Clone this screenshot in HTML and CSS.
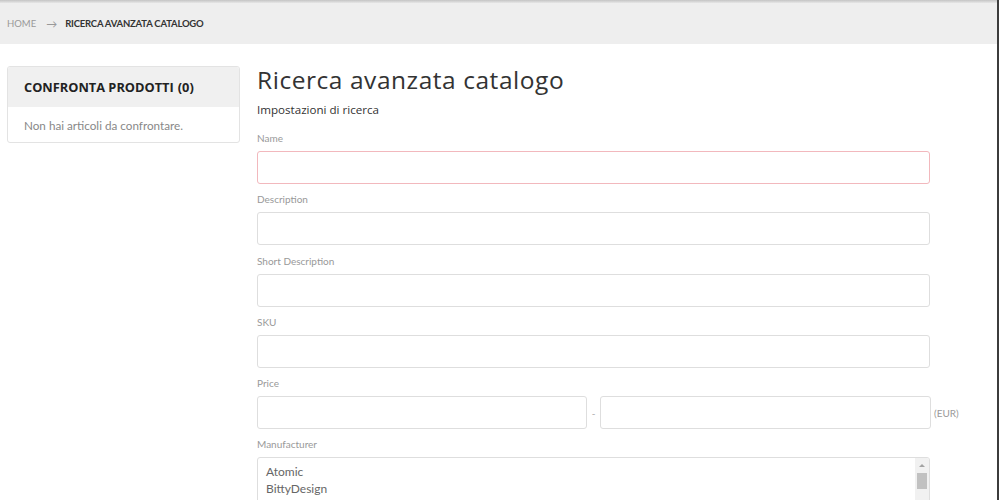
FILE: index.html
```html
<!DOCTYPE html>
<html lang="it">
<head>
<meta charset="utf-8">
<title>Ricerca avanzata catalogo</title>
<link rel="stylesheet" href="styles.css">
</head>
<body>
<div class="frame">
  <div class="topline"></div>
  <nav class="breadcrumb">
    <span class="crumb">Home</span>
    <span class="sep">&rarr;</span>
    <strong class="crumb current">Ricerca avanzata catalogo</strong>
  </nav>
  <div class="page">
    <aside class="sidebar">
      <div class="block">
        <div class="block-title">Confronta prodotti <span class="count">(0)</span></div>
        <div class="block-content">Non hai articoli da confrontare.</div>
      </div>
    </aside>
    <main class="main">
      <h1 class="page-title">Ricerca avanzata catalogo</h1>
      <h2 class="subtitle">Impostazioni di ricerca</h2>
      <form class="form">
        <div class="field">
          <label class="label">Name</label>
          <input class="input input-error" type="text">
        </div>
        <div class="field">
          <label class="label">Description</label>
          <input class="input" type="text">
        </div>
        <div class="field">
          <label class="label">Short Description</label>
          <input class="input" type="text">
        </div>
        <div class="field">
          <label class="label">SKU</label>
          <input class="input" type="text">
        </div>
        <div class="field">
          <label class="label">Price</label>
          <div class="price-row">
            <input class="input price" type="text">
            <span class="dash">-</span>
            <input class="input price price2" type="text">
            <span class="currency">(EUR)</span>
          </div>
        </div>
        <div class="field">
          <label class="label">Manufacturer</label>
          <div class="listbox">
            <div class="options">
              <div class="option">Atomic</div>
              <div class="option">BittyDesign</div>
            </div>
            <div class="scrollbar">
              <div class="arrow"></div>
              <div class="thumb"></div>
            </div>
          </div>
        </div>
      </form>
    </main>
  </div>
</div>
</body>
</html>
```
FILE: styles.css
```css
html, body {
  margin: 0;
  padding: 0;
  background: #fff;
  overflow: hidden;
}
body {
  font-family: Lato, "Liberation Sans", sans-serif;
  color: #333;
}
.frame {
  height: 500px;
  overflow: hidden;
  border-right: 2px solid #3c3c3c;
  box-sizing: border-box;
}
.topline {
  height: 3px;
  background: linear-gradient(#c4c4c4, #e6e6e6);
}
.breadcrumb {
  height: 41px;
  background: #eeeeee;
  display: flex;
  align-items: center;
  padding-left: 7px;
  font-size: 9.5px;
  text-transform: uppercase;
}
.crumb {
  color: #999;
}
.sep {
  color: #999;
  margin: 0 8px 0 10px;
  font-size: 11px;
}
.current {
  color: #333;
  font-weight: 700;
  letter-spacing: -0.2px;
}
.page {
  display: flex;
  gap: 17px;
  padding: 22px 0 0 7px;
}
.sidebar {
  width: 233px;
  flex: none;
}
.block {
  border: 1px solid #e3e3e3;
  border-radius: 3px;
  overflow: hidden;
}
.block-title {
  height: 40px;
  background: #f0f0f0;
  display: flex;
  align-items: center;
  padding-left: 16px;
  font-family: "Open Sans", Lato, sans-serif;
  font-weight: 700;
  font-size: 12.8px;
  text-transform: uppercase;
  color: #222;
}
.count {
  margin-left: 4px;
}
.block-content {
  height: 35px;
  display: flex;
  align-items: center;
  padding-left: 16px;
  font-size: 11.7px;
  color: #888;
}
.main {
  width: 673px;
  flex: none;
}
.page-title {
  margin: 0;
  font-family: "Open Sans", Lato, sans-serif;
  font-weight: 400;
  font-size: 24.5px;
  letter-spacing: 0.55px;
  line-height: 28px;
  color: #333;
}
.subtitle {
  margin: 8px 0 0;
  font-family: "Open Sans", Lato, sans-serif;
  font-weight: 400;
  font-size: 11.6px;
  line-height: 16px;
  color: #333;
}
.form {
  margin-top: 13px;
}
.field {
  margin-bottom: 8.3px;
}
.label {
  display: block;
  font-size: 10px;
  line-height: 14px;
  color: #999;
  margin-bottom: 6px;
}
.input {
  display: block;
  box-sizing: border-box;
  width: 100%;
  height: 33px;
  margin: 0;
  border: 1px solid #dedede;
  border-radius: 3px;
  background: #fff;
  outline: none;
}
.input.input-error {
  border-color: #f2b8bd;
}
.price-row {
  display: flex;
  align-items: center;
  width: 702px;
}
.price {
  width: 330px;
  flex: none;
}
.price2 {
  width: 331px;
}
.dash {
  width: 13px;
  text-align: center;
  font-size: 10px;
  color: #aaa;
}
.currency {
  margin-left: 3px;
  font-size: 10px;
  color: #999;
}
.listbox {
  display: flex;
  box-sizing: border-box;
  height: 60px;
  border: 1px solid #dedede;
  border-radius: 3px;
  overflow: hidden;
}
.options {
  flex: 1;
  padding: 5px 0 0 8px;
  font-size: 12px;
  line-height: 17px;
  color: #666;
}
.scrollbar {
  width: 14px;
  background: #f1f1f1;
  display: flex;
  flex-direction: column;
  align-items: center;
}
.arrow {
  width: 0;
  height: 0;
  margin-top: 6px;
  border-left: 3px solid transparent;
  border-right: 3px solid transparent;
  border-bottom: 3px solid #a3a3a3;
}
.thumb {
  width: 10px;
  height: 16px;
  margin-top: 6px;
  background: #c1c1c1;
}
```
